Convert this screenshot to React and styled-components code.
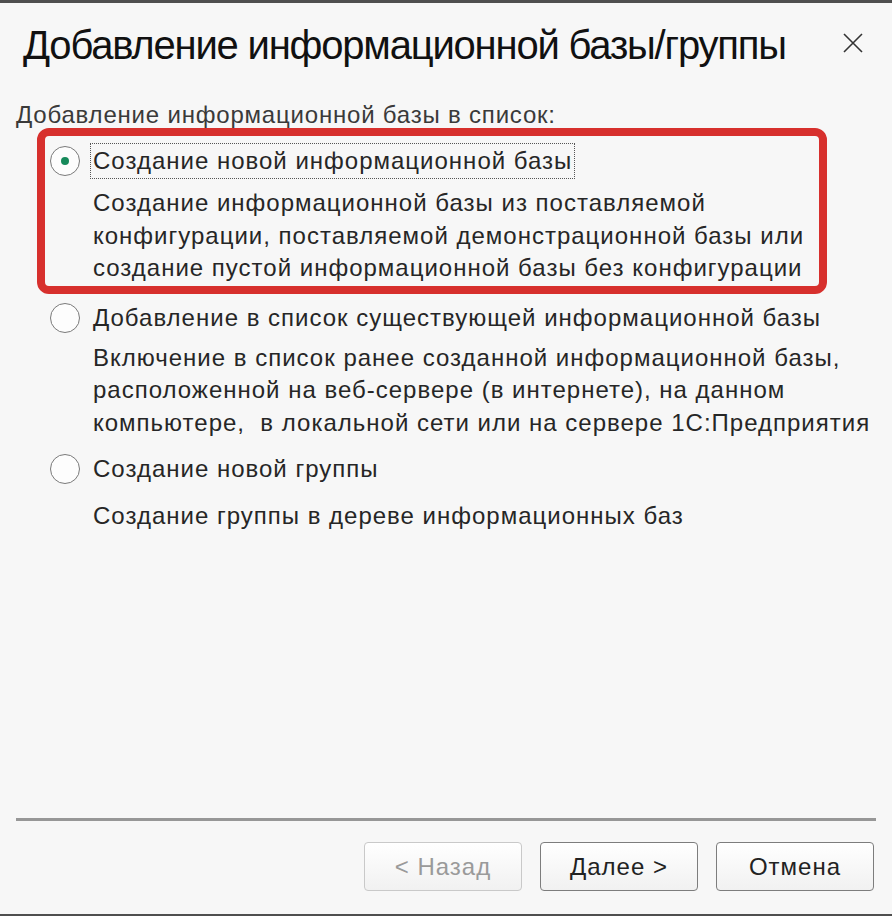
import React from "react";
import styled, { createGlobalStyle } from "styled-components";

const GlobalStyle = createGlobalStyle`
  html, body {
    margin: 0;
    padding: 0;
    background: #f7f7f7;
  }
  body {
    font-family: "Liberation Sans", Arial, sans-serif;
    color: #262626;
  }
`;

const Window = styled.div`
  width: 892px;
  height: 916px;
  box-sizing: border-box;
  display: flex;
  flex-direction: column;
  background: #f7f7f7;
  border-top: 3px solid #4f4f4f;
  border-bottom: 2px solid #4f4f4f;
`;

const Header = styled.div`
  display: flex;
  align-items: center;
  justify-content: space-between;
  height: 84px;
  padding: 0 29px 0 23px;
`;

const Title = styled.h1`
  margin: 0;
  font-size: 40px;
  font-weight: normal;
  color: #111;
  letter-spacing: -1.2px;
`;

const CloseButton = styled.button`
  border: none;
  background: none;
  padding: 0;
  margin-bottom: 5px;
  width: 20px;
  height: 20px;
  display: flex;
  color: #333;
  cursor: pointer;
`;

const Body = styled.div`
  padding: 14px 16px 0 16px;
  flex: 1;
`;

const Caption = styled.div`
  font-size: 24px;
  line-height: 28px;
  letter-spacing: 0.8px;
  color: #3a3a3a;
  margin-bottom: -1px;
`;

const OptionBox = styled.div`
  margin-left: 21px;
  width: 790px;
  box-sizing: border-box;
  padding: ${(p) => (p.$highlight ? `${p.$top}px 0 1px 5px` : `${p.$top}px 0 0 13px`)};
  border: ${(p) => (p.$highlight ? "8px solid #d7302d" : "none")};
  border-radius: 12px;
`;

const OptionRow = styled.label`
  display: flex;
  align-items: center;
  gap: 10px;
  cursor: pointer;
`;

const Radio = styled.span`
  width: 30px;
  height: 30px;
  box-sizing: border-box;
  border-radius: 50%;
  border: 1.5px solid #7a7a7a;
  background: #fdfdfd;
  display: flex;
  align-items: center;
  justify-content: center;
  flex: none;

  &::after {
    content: "";
    width: 8px;
    height: 8px;
    border-radius: 50%;
    background: ${(p) => (p.$checked ? "#178a5b" : "transparent")};
  }
`;

const Label = styled.span`
  font-size: 24px;
  line-height: 28px;
  letter-spacing: 1px;
  padding: 3px 2px 3px 2px;
  border: 1px dotted ${(p) => (p.$focused ? "#555" : "transparent")};
  white-space: nowrap;
`;

const Description = styled.div`
  margin: ${(p) => p.$gap}px 0 0 43px;
  font-size: 24px;
  line-height: 32.5px;
  letter-spacing: 1px;
  white-space: pre;
`;

const Separator = styled.div`
  margin: 0 16px;
  height: 3px;
  background: #979797;
`;

const Footer = styled.div`
  display: flex;
  justify-content: flex-end;
  gap: 18px;
  padding: 21px 18px 23px 0;
`;

const Button = styled.button`
  width: 158px;
  height: 49px;
  box-sizing: border-box;
  border: 1px solid ${(p) => (p.disabled ? "#c9c9c9" : "#7d7d7d")};
  border-radius: 4px;
  background: linear-gradient(#ffffff, #f1f1f1);
  font-family: "Liberation Sans", Arial, sans-serif;
  font-size: 24px;
  letter-spacing: 1px;
  color: ${(p) => (p.disabled ? "#9a9a9a" : "#222")};
  cursor: ${(p) => (p.disabled ? "default" : "pointer")};
`;

const options = [
  {
    label: "Создание новой информационной базы",
    text:
      "Создание информационной базы из поставляемой\nконфигурации, поставляемой демонстрационной базы или\nсоздание пустой информационной базы без конфигурации",
    checked: true,
    top: 7,
    gap: 8,
  },
  {
    label: "Добавление в список существующей информационной базы",
    text:
      "Включение в список ранее созданной информационной базы,\nрасположенной на веб-сервере (в интернете), на данном\nкомпьютере,  в локальной сети или на сервере 1С:Предприятия",
    top: 6,
    gap: 6,
  },
  {
    label: "Создание новой группы",
    text: "Создание группы в дереве информационных баз",
    top: 12,
    gap: 13,
  },
];

const CloseIcon = () => (
  <svg width="20" height="20" viewBox="0 0 20 20">
    <path d="M1 1L19 19M19 1L1 19" stroke="currentColor" strokeWidth="1.6" />
  </svg>
);

const App = () => {
  return (
    <>
      <GlobalStyle />
      <Window>
        <Header>
          <Title>Добавление информационной базы/группы</Title>
          <CloseButton aria-label="Закрыть">
            <CloseIcon />
          </CloseButton>
        </Header>
        <Body>
          <Caption>Добавление информационной базы в список:</Caption>
          {options.map((o, i) => (
            <OptionBox key={i} $highlight={o.checked} $top={o.top}>
              <OptionRow>
                <Radio $checked={o.checked} />
                <Label $focused={o.checked}>{o.label}</Label>
              </OptionRow>
              <Description $gap={o.gap}>{o.text}</Description>
            </OptionBox>
          ))}
        </Body>
        <Separator />
        <Footer>
          <Button disabled>&lt; Назад</Button>
          <Button>Далее &gt;</Button>
          <Button>Отмена</Button>
        </Footer>
      </Window>
    </>
  );
};

export default App;
